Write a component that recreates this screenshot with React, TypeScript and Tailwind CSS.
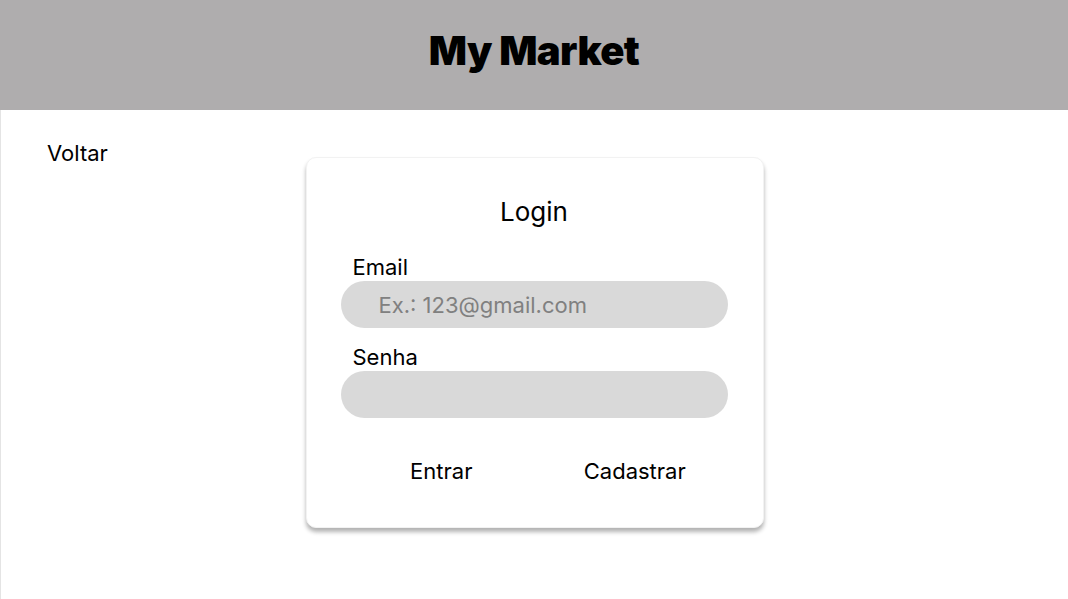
export default function App() {
  return (
    <div className="min-h-screen bg-white text-black" style={{ fontFamily: 'Inter, "Noto Sans", sans-serif' }}>
      <header className="h-[110px] bg-[#afadae] flex items-center justify-center pb-[9px]">
        <h1 className="text-[40px] font-black tracking-[-0.6px] leading-none">My Market</h1>
      </header>

      <main className="grid grid-cols-[1fr_458px_1fr] min-h-[489px] border-l border-[#e4e4e4]">
        <div className="pl-[46px] pt-[30px]">
          <button className="text-[22px] leading-[27px]">Voltar</button>
        </div>

        <div className="pt-[47px]">
          <div className="bg-white rounded-[10px] border border-[#f2f2f2] shadow-[0_4px_4px_rgba(0,0,0,0.3)] pl-[34px] pr-[35px] pt-[38px] pb-[42px]">
            <h2 className="text-center text-[26px] leading-[32px]">Login</h2>

            <label className="block mt-[26px] pl-[12px] text-[22px] leading-[27px]">Email</label>
            <input
              type="text"
              placeholder="Ex.: 123@gmail.com"
              className="w-full h-[47px] rounded-full bg-[#d9d9d9] pl-[38px] text-[22px] placeholder:text-[#808080] outline-none"
            />

            <label className="block mt-[16px] pl-[12px] text-[22px] leading-[27px]">Senha</label>
            <input
              type="password"
              className="w-full h-[47px] rounded-full bg-[#d9d9d9] px-[38px] text-[22px] outline-none"
            />

            <div className="grid grid-cols-2 mt-[40px] ml-[4px] mr-[-4px]">
              <button className="text-[22px] leading-[27px] text-center">Entrar</button>
              <button className="text-[22px] leading-[27px] text-center">Cadastrar</button>
            </div>
          </div>
        </div>

        <div />
      </main>
    </div>
  )
}
